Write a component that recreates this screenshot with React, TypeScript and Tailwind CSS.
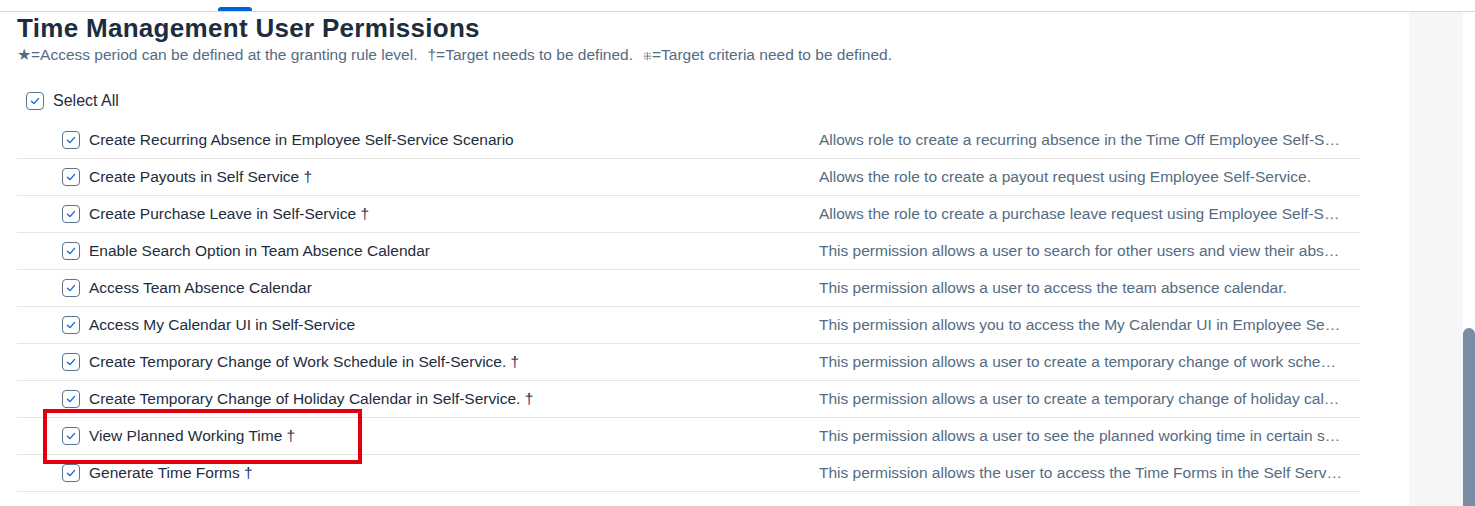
import React from "react";

const rows: { label: string; dagger?: boolean; desc: string }[] = [
  { label: "Create Recurring Absence in Employee Self-Service Scenario", desc: "Allows role to create a recurring absence in the Time Off Employee Self-Service Scenario." },
  { label: "Create Payouts in Self Service", dagger: true, desc: "Allows the role to create a payout request using Employee Self-Service." },
  { label: "Create Purchase Leave in Self-Service", dagger: true, desc: "Allows the role to create a purchase leave request using Employee Self-Service." },
  { label: "Enable Search Option in Team Absence Calendar", desc: "This permission allows a user to search for other users and view their absences." },
  { label: "Access Team Absence Calendar", desc: "This permission allows a user to access the team absence calendar." },
  { label: "Access My Calendar UI in Self-Service", desc: "This permission allows you to access the My Calendar UI in Employee Self-Service." },
  { label: "Create Temporary Change of Work Schedule in Self-Service.", dagger: true, desc: "This permission allows a user to create a temporary change of work schedule in Self-Service." },
  { label: "Create Temporary Change of Holiday Calendar in Self-Service.", dagger: true, desc: "This permission allows a user to create a temporary change of holiday calendar in Self-Service." },
  { label: "View Planned Working Time", dagger: true, desc: "This permission allows a user to see the planned working time in certain scenarios." },
  { label: "Generate Time Forms", dagger: true, desc: "This permission allows the user to access the Time Forms in the Self Service." },
];

function Check() {
  return (
    <span className="flex h-[18px] w-[18px] shrink-0 items-center justify-center rounded-[4px] border border-[#5b738b] bg-white">
      <svg width="12" height="12" viewBox="0 0 12 12" fill="none">
        <path d="M2.5 6.2 L5 8.6 L9.6 3.4" stroke="#0064d9" strokeWidth="1.3" strokeLinecap="round" strokeLinejoin="round" />
      </svg>
    </span>
  );
}

export default function App() {
  return (
    <div className="relative h-[506px] w-[1475px] overflow-hidden bg-white font-['Liberation_Sans',sans-serif] text-[#1d2d3e]">
      <div className="h-[12px] border-b border-[#d9d9d9] pl-[218px] pt-[7px]">
        <div className="h-[4px] w-[34px] rounded-t-[3px] bg-[#0064d9]" />
      </div>
      <div className="flex h-[494px]">
        <div className="flex-1 pl-[17px] pr-[49px]">
          <h1 className="mt-[1px] text-[26px] font-bold leading-[30px] tracking-[0.3px]">Time Management User Permissions</h1>
          <p className="mt-[3px] whitespace-nowrap text-[15.5px] leading-[18px] text-[#556b82]">
            ★=Access period can be defined at the granting rule level.
            <span className="ml-[10px]">†=Target needs to be defined.</span>
            <span className="ml-[10px] text-[11px]">⁜</span>=Target criteria need to be defined.
          </p>
          <div className="mt-[22px] flex h-[28px] items-center gap-[9px] pl-[9px]">
            <Check />
            <span className="text-[16px]">Select All</span>
          </div>
          <div className="mt-[7px]">
            {rows.map((r) => (
              <div key={r.label} className="flex h-[37px] items-center border-b border-[#e5e5e5]">
                <div className="flex w-[802px] items-center gap-[9px] pl-[45px]">
                  <Check />
                  <span className="text-[15.5px]">
                    {r.label}
                    {r.dagger && <span className="text-[#1d2d5e]"> †</span>}
                  </span>
                </div>
                <div className="w-[523px] truncate text-[15.5px] text-[#556b82]">{r.desc}</div>
              </div>
            ))}
          </div>
        </div>
        <div className="w-[54px] bg-[#f5f6f7]" />
        <div className="flex w-[12px] flex-col">
          <div className="h-[316px]" />
          <div className="flex-1 rounded-t-[6px] bg-[#7b8da5]" />
        </div>
      </div>
      <div className="absolute left-[43px] top-[409px] h-[55px] w-[319px] border-[4px] border-[#e2000f]" />
    </div>
  );
}
